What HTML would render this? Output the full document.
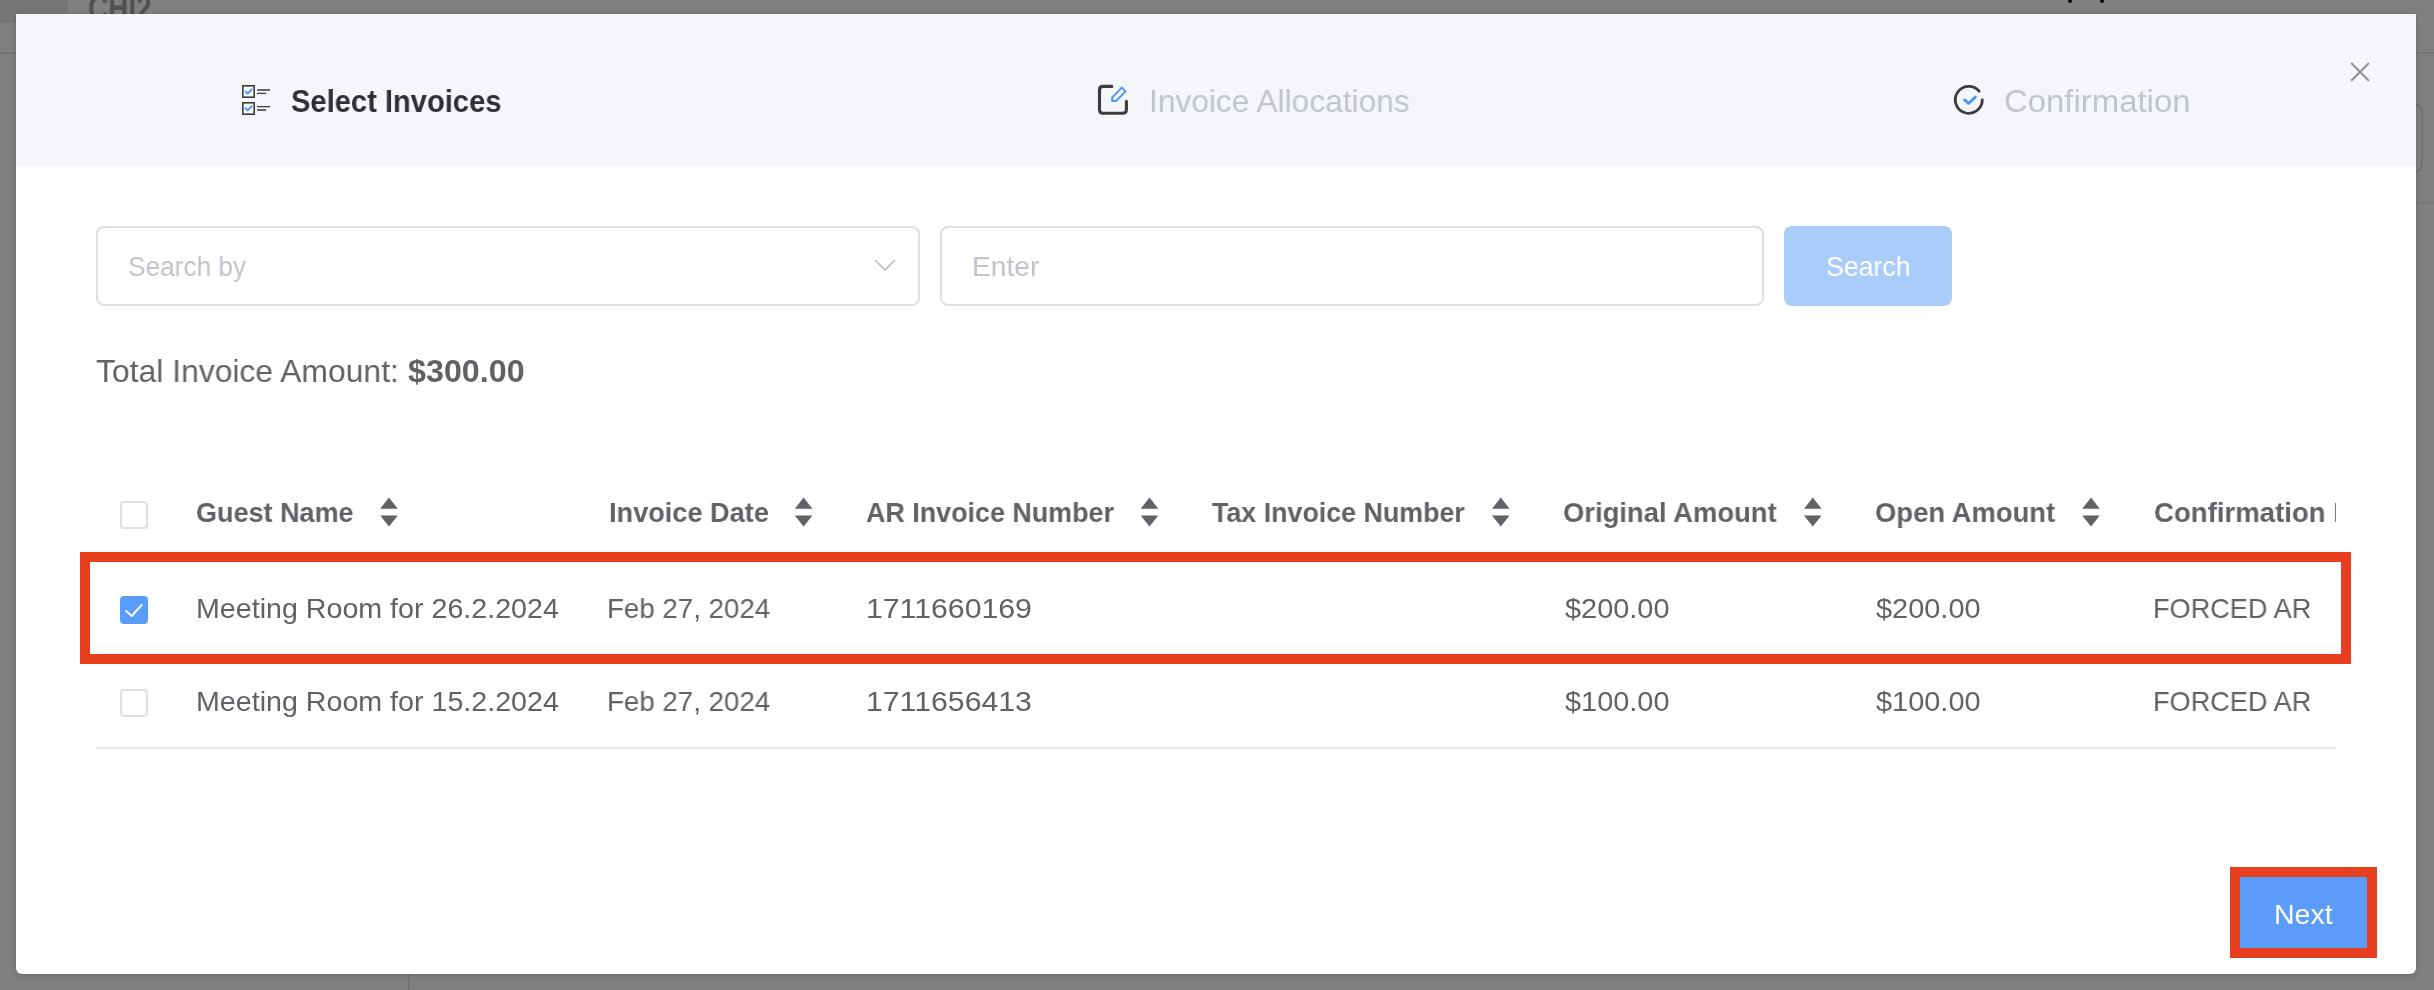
<!DOCTYPE html>
<html><head><meta charset="utf-8">
<style>
html,body{margin:0;padding:0;}
body{width:2434px;height:990px;overflow:hidden;position:relative;background:#7f7f7f;font-family:"Liberation Sans",sans-serif;}
.abs{position:absolute;}
.t{position:absolute;white-space:nowrap;will-change:transform;line-height:40px;height:40px;transform-origin:0 0;}
#modal{position:absolute;left:16px;top:14px;width:2400px;height:960px;background:#fff;border-radius:0 0 6px 6px;box-shadow:0 1px 5px rgba(0,0,0,0.18);}
#hdr{position:absolute;left:16px;top:14px;width:2400px;height:152px;background:#f4f6f9;}
.box{position:absolute;box-sizing:border-box;border:2px solid #dcdfe6;border-radius:8px;background:#fff;}
.cb{position:absolute;box-sizing:border-box;width:28px;height:28px;border:2px solid #dcdfe6;border-radius:4px;background:#fff;}
svg{position:absolute;left:0;top:0;overflow:visible;}
</style></head>
<body>
<!-- background page (dimmed) -->
<div class="abs" style="left:0;top:0;width:68px;height:23px;background:#767676"></div>
<div class="abs" style="left:0;top:52px;width:16px;height:2px;background:#727272"></div>
<div class="abs" style="left:2416px;top:52px;width:18px;height:2px;background:#737373"></div>
<div class="abs" style="left:2416px;top:202px;width:18px;height:2px;background:#767676"></div>
<div class="abs" style="left:2400px;top:103px;width:23px;height:70px;box-sizing:border-box;border:2px solid #6f6f6f;border-radius:8px"></div>
<div class="abs" style="left:408px;top:960px;width:2px;height:30px;background:#737373"></div>
<div class="t" style="left:88.2px;top:-11.5px;font-size:36px;font-weight:bold;color:#505050;transform:scaleX(0.775)">CHI2</div>
<div class="abs" style="left:2068px;top:-3px;width:4px;height:6px;border-radius:50%;background:#000"></div>
<div class="abs" style="left:2100px;top:-3px;width:4px;height:6px;border-radius:50%;background:#000"></div>

<div id="modal"></div>
<div id="hdr"></div>

<!-- inputs -->
<div class="box" style="left:96px;top:226px;width:824px;height:80px"></div>
<div class="box" style="left:940px;top:226px;width:824px;height:80px"></div>
<div class="abs" style="left:1784px;top:226px;width:168px;height:80px;border-radius:8px;background:#a9cdf8"></div>

<!-- checkboxes -->
<div class="cb" style="left:120px;top:501px"></div>
<div class="cb" style="left:120px;top:596px;background:#5b9cf8;border-color:#5b9cf8"></div>
<div class="cb" style="left:120px;top:689px"></div>

<!-- table lines -->
<div class="abs" style="left:96px;top:562px;width:2240px;height:1px;background:#eef1f6"></div>
<div class="abs" style="left:96px;top:747px;width:2240px;height:2px;background:#e4e7ed"></div>

<!-- Next button -->
<div class="abs" style="left:2236px;top:873px;width:136px;height:80px;background:#5b9cf8;border-radius:4px"></div>

<svg width="2434" height="990" viewBox="0 0 2434 990">
  <!-- list icon -->
  <g fill="none" stroke="#3c3c3c" stroke-width="1.6">
    <rect x="242.8" y="85.8" width="11.4" height="11.4"/>
    <rect x="242.8" y="102.8" width="11.4" height="11.4"/>
  </g>
  <g fill="none" stroke="#3c3c3c" stroke-width="1.4" stroke-linecap="round">
    <path d="M257.6 90 H269.6 M257.6 93.4 H265.6 M257.6 106.6 H269.6 M257.6 110 H265.6"/>
  </g>
  <g fill="none" stroke="#4a95f5" stroke-width="1.8" stroke-linecap="round" stroke-linejoin="round">
    <path d="M245.4 91.4 L247.6 93.6 L251.8 89.4"/>
    <path d="M245.4 108.2 L247.6 110.4 L251.8 106.2"/>
  </g>
  <!-- edit icon -->
  <path d="M1111.8 86.4 H1103 Q1099.5 86.4 1099.5 89.9 V109.8 Q1099.5 113.3 1103 113.3 H1122.9 Q1126.4 113.3 1126.4 109.8 V101.4" fill="none" stroke="#3c3c3c" stroke-width="3.1" stroke-linecap="round" stroke-linejoin="round"/>
  <path d="M1112.2 97.4 L1121.8 87.6 L1125.6 91.4 L1115.9 101.1 L1112.2 101.1 Z" fill="none" stroke="#4a95f5" stroke-width="2" stroke-linejoin="round"/>
  <!-- confirmation icon -->
  <path d="M1982.3 99.8 A13.5 13.5 0 1 1 1979.1 91.1" fill="none" stroke="#3c3c3c" stroke-width="2.8" stroke-linecap="round"/>
  <path d="M1964.6 99.9 L1968.6 103.4 L1975.4 96.9" fill="none" stroke="#4a95f5" stroke-width="2.8" stroke-linecap="round" stroke-linejoin="round"/>
  <!-- close -->
  <path d="M2351.2 63 L2368.9 80.7 M2368.9 63 L2351.2 80.7" stroke="#8f9195" stroke-width="2"/>
  <!-- chevron -->
  <path d="M875.6 260.5 L885 270 L894.4 260.5" fill="none" stroke="#b6bac2" stroke-width="1.7" stroke-linecap="round" stroke-linejoin="round"/>
  <!-- sort icons -->
  <g fill="#606266">
    <path id="sortA" d="M380.2 508.8 L389 497.6 L397.8 508.8 Z M380.2 515.4 L397.8 515.4 L389 526.4 Z"/>
    <use href="#sortA" x="414.6"/>
    <use href="#sortA" x="760.5"/>
    <use href="#sortA" x="1111.8"/>
    <use href="#sortA" x="1423.8"/>
    <use href="#sortA" x="1702"/>
  </g>
  <!-- checked mark -->
  <path d="M126 610.8 L131.6 616 L141.8 604.8" fill="none" stroke="#fff" stroke-width="1.9" stroke-linecap="round" stroke-linejoin="round"/>
</svg>

<!-- clipped Confirmation No. header -->
<div class="abs" style="left:96px;top:480px;width:2240px;height:60px;overflow:hidden">
  <div id="confhdr" class="t" style="left:2058px;top:12.6px;font-size:28px;font-weight:bold;color:#606266;transform:scaleX(0.985)">Confirmation No.</div>
</div>

<div class="t" style="left:290.60px;top:80.71px;font-size:32px;font-weight:bold;color:#2f3034;transform:scaleX(0.9100)">Select Invoices</div>
<div class="t" style="left:1148.62px;top:80.71px;font-size:32px;font-weight:normal;color:#c0c4cc;transform:scaleX(0.9900)">Invoice Allocations</div>
<div class="t" style="left:2003.97px;top:80.71px;font-size:32px;font-weight:normal;color:#c0c4cc;transform:scaleX(1.0279)">Confirmation</div>
<div class="t" style="left:127.96px;top:247.09px;font-size:28px;font-weight:normal;color:#c0c4cc;transform:scaleX(0.9363)">Search by</div>
<div class="t" style="left:972.39px;top:247.09px;font-size:28px;font-weight:normal;color:#c0c4cc;transform:scaleX(1.0062)">Enter</div>
<div class="t" style="left:1826.05px;top:247.09px;font-size:28px;font-weight:normal;color:#ffffff;transform:scaleX(0.9519)">Search</div>
<div class="t" style="left:96.30px;top:350.91px;font-size:32px;font-weight:normal;color:#606266;transform:scaleX(0.9956)">Total Invoice Amount:</div>
<div class="t" style="left:408.20px;top:350.91px;font-size:32px;font-weight:bold;color:#606266;transform:scaleX(1.0081)">$300.00</div>
<div class="t" style="left:196.04px;top:492.99px;font-size:28px;font-weight:bold;color:#606266;transform:scaleX(0.9640)">Guest Name</div>
<div class="t" style="left:608.53px;top:492.99px;font-size:28px;font-weight:bold;color:#606266;transform:scaleX(0.9689)">Invoice Date</div>
<div class="t" style="left:866.00px;top:492.99px;font-size:28px;font-weight:bold;color:#606266;transform:scaleX(0.9598)">AR Invoice Number</div>
<div class="t" style="left:1212.40px;top:492.99px;font-size:28px;font-weight:bold;color:#606266;transform:scaleX(0.9576)">Tax Invoice Number</div>
<div class="t" style="left:1562.92px;top:492.99px;font-size:28px;font-weight:bold;color:#606266;transform:scaleX(0.9789)">Original Amount</div>
<div class="t" style="left:1875.02px;top:492.99px;font-size:28px;font-weight:bold;color:#606266;transform:scaleX(0.9790)">Open Amount</div>
<div class="t" style="left:195.96px;top:589.49px;font-size:28px;font-weight:normal;color:#606266;transform:scaleX(1.0224)">Meeting Room for 26.2.2024</div>
<div class="t" style="left:607.22px;top:589.49px;font-size:28px;font-weight:normal;color:#606266;transform:scaleX(0.9886)">Feb 27, 2024</div>
<div class="t" style="left:866.34px;top:589.49px;font-size:28px;font-weight:normal;color:#606266;transform:scaleX(1.0796)">1711660169</div>
<div class="t" style="left:1564.60px;top:589.49px;font-size:28px;font-weight:normal;color:#606266;transform:scaleX(1.0324)">$200.00</div>
<div class="t" style="left:1876.40px;top:589.49px;font-size:28px;font-weight:normal;color:#606266;transform:scaleX(1.0334)">$200.00</div>
<div class="t" style="left:2153.06px;top:589.49px;font-size:28px;font-weight:normal;color:#606266;transform:scaleX(0.9686)">FORCED AR</div>
<div class="t" style="left:195.96px;top:682.19px;font-size:28px;font-weight:normal;color:#606266;transform:scaleX(1.0224)">Meeting Room for 15.2.2024</div>
<div class="t" style="left:607.22px;top:682.19px;font-size:28px;font-weight:normal;color:#606266;transform:scaleX(0.9886)">Feb 27, 2024</div>
<div class="t" style="left:866.34px;top:682.19px;font-size:28px;font-weight:normal;color:#606266;transform:scaleX(1.0796)">1711656413</div>
<div class="t" style="left:1564.60px;top:682.19px;font-size:28px;font-weight:normal;color:#606266;transform:scaleX(1.0324)">$100.00</div>
<div class="t" style="left:1876.40px;top:682.19px;font-size:28px;font-weight:normal;color:#606266;transform:scaleX(1.0334)">$100.00</div>
<div class="t" style="left:2153.06px;top:682.19px;font-size:28px;font-weight:normal;color:#606266;transform:scaleX(0.9686)">FORCED AR</div>
<div class="t" style="left:2274.26px;top:895.39px;font-size:28px;font-weight:normal;color:#ffffff;transform:scaleX(1.0198)">Next</div>

<!-- red annotations -->
<div class="abs" style="left:80px;top:552px;width:2271px;height:112px;box-sizing:border-box;border:10px solid #e8401f"></div>
<div class="abs" style="left:2230px;top:867px;width:147px;height:91px;box-sizing:border-box;border:10px solid #e8401f"></div>
</body></html>
